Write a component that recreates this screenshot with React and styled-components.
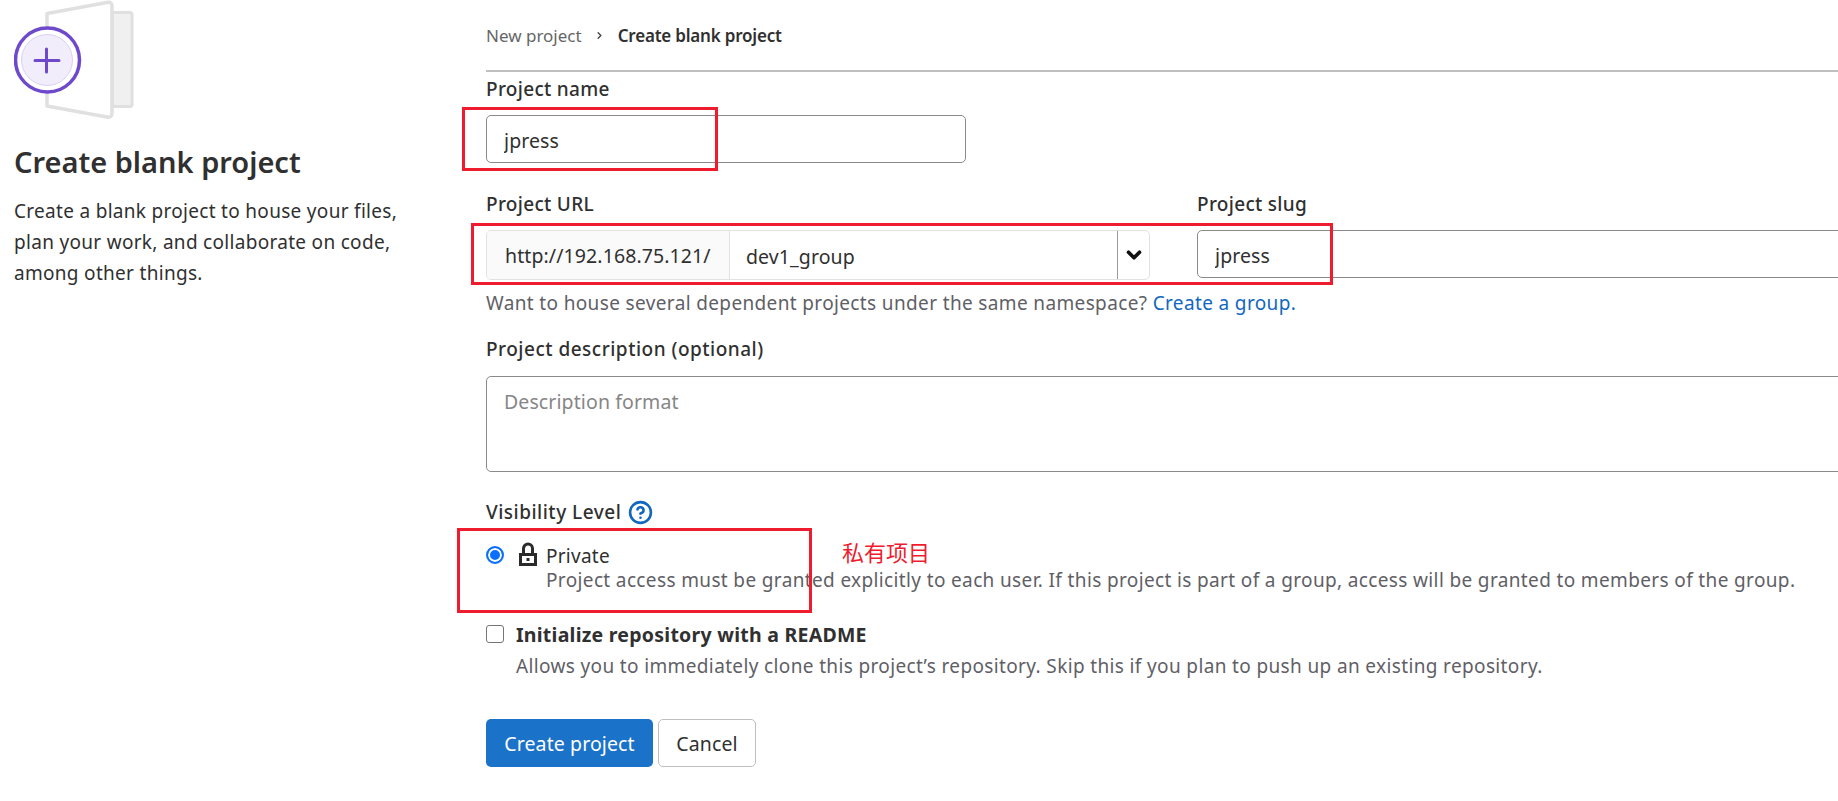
import { createGlobalStyle, styled } from "styled-components"
import { CircleHelp, ChevronDown, ChevronRight } from "lucide-react"

const GlobalStyle = createGlobalStyle`
    html, body {
        margin: 0;
        padding: 0;
        background: #fff;
        overflow: hidden;
    }
    * {
        box-sizing: border-box;
    }
    body {
        font-family: "Noto Sans", "Open Sans", sans-serif;
        color: #303030;
    }
`

const Page = styled.div`
    position: relative;
    display: flex;
    width: 1838px;
    height: 801px;
    overflow: hidden;
`

const Sidebar = styled.aside`
    width: 486px;
    flex: none;
    padding-left: 14px;
`

const SideTitle = styled.h4`
    margin: 23px 0 0;
    font-size: 29px;
    line-height: 38px;
    font-weight: 600;
`

const SideText = styled.p`
    margin: 15px 0 0;
    font-size: 19px;
    line-height: 31px;
    letter-spacing: 0.3px;
    width: 400px;
`

const Main = styled.main`
    width: 1420px;
    flex: none;
`

const Breadcrumb = styled.nav`
    display: flex;
    align-items: center;
    height: 72px;
    padding-bottom: 0;
    font-size: 17px;
    color: #666;
    border-bottom: 2px solid #bfbfbf;
`

const Crumb = styled.span`
    letter-spacing: ${p => (p.$current ? "-0.2px" : "0")};
    color: ${p => (p.$current ? "#303030" : "#666")};
    font-weight: ${p => (p.$current ? 600 : 400)};
`

const Sep = styled.span`
    display: flex;
    width: 36px;
    justify-content: center;
    color: #444;
`

const Label = styled.label`
    display: flex;
    align-items: center;
    gap: 7px;
    font-size: 19px;
    line-height: 26px;
    font-weight: 500;
    letter-spacing: ${p => p.$spacing || "0.3px"};
    color: #303030;
`

const Field = styled.div`
    margin-top: ${p => p.$top || 0}px;
`

const TextInput = styled.input`
    display: block;
    width: ${p => p.$width || "100%"};
    height: 48px;
    margin-top: ${p => p.$gap ?? 13}px;
    padding: 2px 17px 0;
    border: 1.5px solid #8a8a8a;
    border-radius: 5px;
    font: inherit;
    font-size: 19.5px;
    letter-spacing: 0.1px;
    color: #303030;
    background: #fff;
    outline: none;
`

const UrlRow = styled.div`
    display: flex;
    gap: 47px;
    margin-top: 28px;
`

const UrlColumn = styled.div`
    width: 664px;
    flex: none;
`

const SlugColumn = styled.div`
    flex: 1;
`

const UrlGroup = styled.div`
    display: flex;
    height: 50px;
    margin-top: 13px;
    border: 1.5px solid #e2e2e2;
    border-radius: 5px;
    font-size: 19.5px;
    letter-spacing: 0.1px;
`

const UrlPrefix = styled.div`
    display: flex;
    align-items: center;
    width: 243px;
    padding-left: 18px;
    background: #fafafa;
    border-right: 1.5px solid #e2e2e2;
    border-radius: 4px 0 0 4px;
    white-space: nowrap;
`

const Namespace = styled.div`
    display: flex;
    align-items: center;
    flex: 1;
    padding: 2px 0 0 16px;
`

const SelectToggle = styled.div`
    display: flex;
    align-items: center;
    justify-content: center;
    width: 32px;
    border-left: 1.5px solid #9a9a9a;
    color: #111;
`

const HelpText = styled.p`
    margin: ${p => p.$top || 0}px 0 0;
    font-size: 19px;
    line-height: 24px;
    letter-spacing: 0.36px;
    color: #5f6066;
    white-space: nowrap;
`

const GroupLink = styled.a`
    color: #1068bf;
`

const DescriptionBox = styled.textarea`
    display: block;
    width: 100%;
    height: 96px;
    margin-top: 14px;
    padding: 11px 17px;
    border: 1.5px solid #8a8a8a;
    border-radius: 5px;
    font: inherit;
    font-size: 19.5px;
    letter-spacing: 0.1px;
    resize: none;
    outline: none;

    &::placeholder {
        color: #868686;
    }
`

const OptionRow = styled.div`
    display: flex;
    align-items: flex-start;
    margin-top: ${p => p.$top}px;
`

const Radio = styled.span`
    flex: none;
    width: 18px;
    height: 18px;
    margin-top: 3px;
    border-radius: 50%;
    border: 2px solid #0b6ffd;
    background: #0b6ffd;
    box-shadow: inset 0 0 0 2px #fff;
`

const Checkbox = styled.span`
    flex: none;
    width: 18px;
    height: 18px;
    margin-top: 3px;
    border-radius: 3px;
    border: 1.5px solid #767676;
    background: #fff;
`

const LockIcon = styled.svg`
    flex: none;
    margin: -1px 9px 0 15px;
`

const OptionBody = styled.div`
    margin-left: ${p => p.$left || 0}px;
`

const OptionTitle = styled.div`
    font-size: ${p => (p.$bold ? "19.5px" : "19px")};
    line-height: 26px;
    letter-spacing: ${p => (p.$bold ? "0.25px" : "0.25px")};
    font-weight: ${p => (p.$bold ? 700 : 400)};
    color: #303030;
`

const OptionHelp = styled(HelpText)`
    line-height: 23px;
    margin-top: ${p => p.$top || 0}px;
`

const Actions = styled.div`
    display: flex;
    gap: 5px;
    margin-top: 41px;
`

const Button = styled.button`
    height: 48px;
    width: ${p => p.$width}px;
    padding: 0;
    border-radius: 5px;
    font: inherit;
    font-size: 19.5px;
    letter-spacing: 0.1px;
    color: ${p => (p.$primary ? "#fff" : "#303030")};
    background: ${p => (p.$primary ? "#1b72c9" : "#fff")};
    border: ${p => (p.$primary ? "none" : "1.5px solid #bfbfbf")};
`

// the red marks someone drew on top of the screenshot
const Mark = styled.div`
    position: absolute;
    left: ${p => p.$x}px;
    top: ${p => p.$y}px;
    width: ${p => p.$w}px;
    height: ${p => p.$h}px;
    border: 3px solid #ee1c2e;
    pointer-events: none;
`

const MarkNote = styled.div`
    position: absolute;
    left: 842px;
    top: 536px;
    font-family: "Noto Sans CJK SC", sans-serif;
    font-size: 22px;
    line-height: 30px;
    color: #ee1c2e;
`

const BlankProjectIcon = () => (
    <svg width="140" height="120" viewBox="14 0 140 120" style={{ display: "block" }}>
        <rect x="112" y="12.5" width="20" height="94" rx="2" fill="#f0f0f0" stroke="#e0e0e0" strokeWidth="3" />
        <path
            d="M47 13.5 L107 2.5 Q112 1.5 112 6 L112 113 Q112 118 107 117 L47 106 Z"
            fill="#fff"
            stroke="#e0e0e0"
            strokeWidth="3.5"
            strokeLinejoin="round"
        />
        <circle cx="47.5" cy="60" r="32" fill="#fff" stroke="#6e49cb" strokeWidth="3.5" />
        <circle cx="47" cy="60" r="25.5" fill="#f1edfb" stroke="#d9d1f2" strokeWidth="1" />
        <path d="M35 60.5 H59 M46.5 49 V72" stroke="#6e49cb" strokeWidth="3" strokeLinecap="round" />
    </svg>
)

const App = () => (
    <Page>
        <GlobalStyle />
        <Sidebar>
            <BlankProjectIcon />
            <SideTitle>Create blank project</SideTitle>
            <SideText>Create a blank project to house your files, plan your work, and collaborate on code, among other things.</SideText>
        </Sidebar>
        <Main>
            <Breadcrumb>
                <Crumb>New project</Crumb>
                <Sep><ChevronRight size={11} strokeWidth={3} /></Sep>
                <Crumb $current>Create blank project</Crumb>
            </Breadcrumb>
            <Field $top={4}>
                <Label>Project name</Label>
                <TextInput $width="480px" defaultValue="jpress" />
            </Field>
            <UrlRow>
                <UrlColumn>
                    <Label>Project URL</Label>
                    <UrlGroup>
                        <UrlPrefix>http://192.168.75.121/</UrlPrefix>
                        <Namespace>dev1_group</Namespace>
                        <SelectToggle><ChevronDown size={22} strokeWidth={4} /></SelectToggle>
                    </UrlGroup>
                </UrlColumn>
                <SlugColumn>
                    <Label>Project slug</Label>
                    <TextInput $gap={13} defaultValue="jpress" />
                </SlugColumn>
            </UrlRow>
            <HelpText $top={11}>
                Want to house several dependent projects under the same namespace? <GroupLink>Create a group.</GroupLink>
            </HelpText>
            <Field $top={21}>
                <Label $spacing="0.5px">Project description (optional)</Label>
                <DescriptionBox placeholder="Description format" />
            </Field>
            <Field $top={27}>
                <Label $spacing="0.5px">
                    Visibility Level
                    <CircleHelp size={25} color="#1068bf" strokeWidth={2.5} />
                </Label>
            </Field>
            <OptionRow $top={18}>
                <Radio />
                <LockIcon width="18" height="24" viewBox="0 0 18 24">
                    <path d="M4.5 12 V6.5 a4.5 4.5 0 0 1 9 0 V12" fill="none" stroke="#2b2b2b" strokeWidth="3" />
                    <rect x="1.5" y="12.5" width="15" height="10" fill="none" stroke="#2b2b2b" strokeWidth="3" />
                    <rect x="7.5" y="16" width="3" height="3" fill="#2b2b2b" />
                </LockIcon>
                <OptionBody>
                    <OptionTitle>Private</OptionTitle>
                    <OptionHelp>Project access must be granted explicitly to each user. If this project is part of a group, access will be granted to members of the group.</OptionHelp>
                </OptionBody>
            </OptionRow>
            <OptionRow $top={30}>
                <Checkbox />
                <OptionBody $left={12}>
                    <OptionTitle $bold>Initialize repository with a README</OptionTitle>
                    <OptionHelp $top={7}>Allows you to immediately clone this project’s repository. Skip this if you plan to push up an existing repository.</OptionHelp>
                </OptionBody>
            </OptionRow>
            <Actions>
                <Button $primary $width={167}>Create project</Button>
                <Button $width={98}>Cancel</Button>
            </Actions>
        </Main>
        <Mark $x={462} $y={107} $w={256} $h={64} />
        <Mark $x={471} $y={223} $w={862} $h={62} />
        <Mark $x={457} $y={528} $w={355} $h={85} />
        <MarkNote>私有项目</MarkNote>
    </Page>
)

export default App
